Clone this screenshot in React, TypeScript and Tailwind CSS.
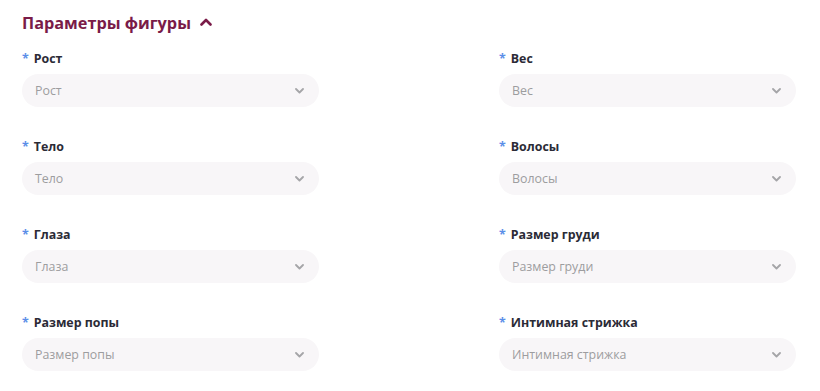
import React from "react";

const rows: [string, string][] = [
  ["Рост", "Вес"],
  ["Тело", "Волосы"],
  ["Глаза", "Размер груди"],
  ["Размер попы", "Интимная стрижка"],
];

function Field({ label }: { label: string }) {
  return (
    <div className="flex flex-col">
      <div className="flex items-center h-[18px] text-[12.4px] leading-[18px] font-bold text-[#2b2b36]">
        <span className="text-[#5b8ee8] mr-[5px]">*</span>
        <span>{label}</span>
      </div>
      <div className="mt-[6px] w-[297px] h-[33px] rounded-full bg-[#f8f6f8] flex items-center justify-between pl-[13px] pr-[15px]">
        <span className="text-[12.4px] leading-[18px] text-[#9d9d9f]">{label}</span>
        <svg width="9" height="6" viewBox="0 0 9 6" className="block">
          <polyline points="1,1 4.5,4.5 8,1" fill="none" stroke="#a5a5a8" strokeWidth="1.8" strokeLinecap="round" strokeLinejoin="round" />
        </svg>
      </div>
    </div>
  );
}

export default function App() {
  return (
    <div
      className="w-[820px] h-[391px] bg-white pl-[22px] pt-[11px]"
      style={{ fontFamily: '"Open Sans", "Noto Sans", sans-serif' }}
    >
      <div className="flex items-center h-[24px]">
        <h2 className="text-[16.3px] leading-[24px] font-bold text-[#7a1b48]">Параметры фигуры</h2>
        <svg width="12" height="8" viewBox="0 0 12 8" className="ml-[9px] mt-[-2px]">
          <polyline points="1.5,6.5 6,2 10.5,6.5" fill="none" stroke="#7a1b48" strokeWidth="2.6" strokeLinecap="round" strokeLinejoin="round" />
        </svg>
      </div>
      <div className="mt-[15px] grid grid-cols-[477px_1fr] gap-y-[31px]">
        {rows.map(([a, b]) => (
          <React.Fragment key={a}>
            <Field label={a} />
            <Field label={b} />
          </React.Fragment>
        ))}
      </div>
    </div>
  );
}
